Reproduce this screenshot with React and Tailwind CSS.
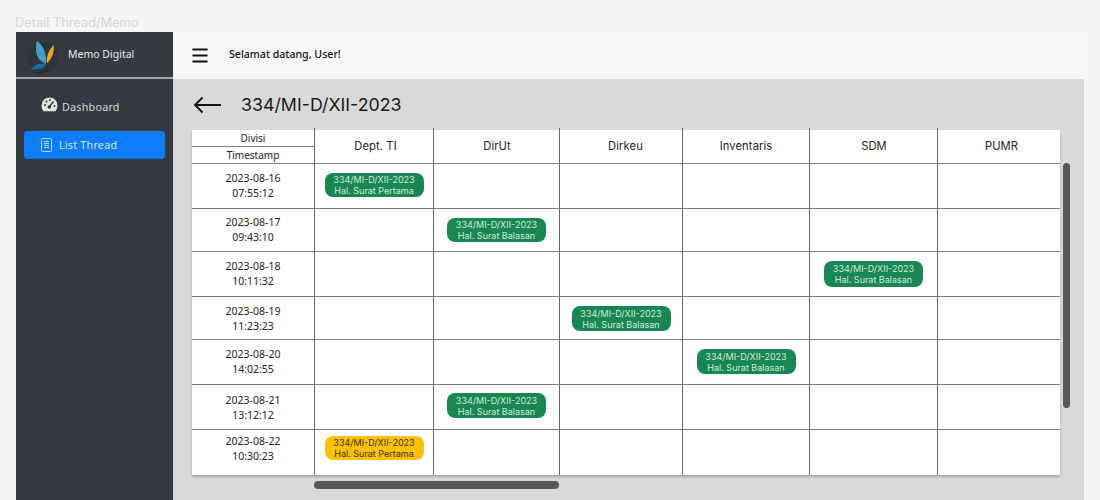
const cols = [
  { n: "Dept. TI", c: "pl-[3px]" },
  { n: "DirUt", c: "pl-[1px]" },
  { n: "Dirkeu", c: "pl-[9px]" },
  { n: "Inventaris", c: "" },
  { n: "SDM", c: "pl-[1px]" },
  { n: "PUMR", c: "pl-[5px]" },
];
const rows = [
  { d: "2023-08-16", t: "07:55:12", h: "h-[45px]", dp: "pt-[7px]", pp: "pt-[9px]", ph: "h-[24px]", col: 0, s: "Hal. Surat Pertama" },
  { d: "2023-08-17", t: "09:43:10", h: "h-[43px]", dp: "pt-[6px]", pp: "pt-[9px]", ph: "h-[24px]", col: 1, s: "Hal. Surat Balasan" },
  { d: "2023-08-18", t: "10:11:32", h: "h-[45px]", dp: "pt-[7px]", pp: "pt-[9px]", ph: "h-[26px]", col: 4, s: "Hal. Surat Balasan" },
  { d: "2023-08-19", t: "11:23:23", h: "h-[43px]", dp: "pt-[7px]", pp: "pt-[9px]", ph: "h-[25px]", col: 2, s: "Hal. Surat Balasan" },
  { d: "2023-08-20", t: "14:02:55", h: "h-[45px]", dp: "pt-[7px]", pp: "pt-[9px]", ph: "h-[25px]", col: 3, s: "Hal. Surat Balasan" },
  { d: "2023-08-21", t: "13:12:12", h: "h-[45px]", dp: "pt-[8px]", pp: "pt-[8px]", ph: "h-[25px]", col: 1, s: "Hal. Surat Balasan" },
  { d: "2023-08-22", t: "10:30:23", h: "h-[45px]", dp: "pt-[4px]", pp: "pt-[6px]", ph: "h-[24px]", col: 0, s: "Hal. Surat Pertama", warn: true },
];
const gridCols = "grid grid-cols-[123px_119px_126px_123px_127px_128px_122px]";

function Logo() {
  return (
    <svg width="36" height="40" viewBox="0 0 36 40" className="shrink-0">
      <ellipse cx="18" cy="22" rx="15" ry="15" fill="#2f3439" />
      <path d="M12 6 C18 10 22 18 21 29 C16 27 11 22 11 15 C11 11 11 8 12 6Z" fill="#3f9fc9" />
      <path d="M21 29 C20 33 14 35 6 34.500 C8 30 14 28 21 29Z" fill="#1d6c9c" />
      <path d="M29 10 C29 17 27 24 22 28 C21 22 24 14 29 10Z" fill="#e8a825" />
      <path d="M6 36 C14 39 24 36 30 31 C24 38 12 41 6 36Z" fill="#25292d" />
    </svg>
  );
}

function Gauge() {
  return (
    <svg width="17" height="15" viewBox="0 0 17 15">
      <path fill="#e4e4e4" d="M8.500 0.500a8 8 0 0 1 8 8c0 2-.6 3.800-1.700 5.200-.3.400-.7.600-1.200.600H3.400c-.5 0-.9-.2-1.200-.6C1.100 12.300.500 10.500.500 8.500a8 8 0 0 1 8-8Z" />
      <path d="M8 10 L12.500 4.500" stroke="#343a40" strokeWidth="1.400" />
      <circle cx="8.300" cy="10" r="1.800" fill="#343a40" />
      <circle cx="4" cy="8" r="1" fill="#343a40" />
      <circle cx="5.500" cy="4.500" r="1" fill="#343a40" />
      <circle cx="9" cy="3" r="1" fill="#343a40" />
      <circle cx="13.500" cy="9" r="1" fill="#343a40" />
    </svg>
  );
}

function Doc() {
  return (
    <svg width="11" height="14" viewBox="0 0 11 14" fill="none" stroke="#b5d8ff" strokeWidth="1">
      <rect x="0.500" y="0.500" width="10" height="13" rx="1" />
      <path d="M3 3.500h5M3 5.500h5M3 7.500h5M3 9.500h5" />
    </svg>
  );
}

function Pill({ warn, s, ph }) {
  return (
    <div className={`w-[99px] ${ph} rounded-[8px] flex flex-col items-center justify-center text-[9px] leading-[11px] font-['Inter',sans-serif] ${warn ? "bg-[#ffc107] text-[#3a2f05]" : "bg-[#198754] text-[#cfeadb]"}`}>
      <span>334/MI-D/XII-2023</span>
      <span>{s}</span>
    </div>
  );
}

export default function App() {
  return (
    <div className="w-[1100px] h-[500px] overflow-hidden bg-[#f5f5f5] font-['Open_Sans',sans-serif]">
      <div className="h-[32px] pl-[15px] pt-[14px] text-[12.800px] leading-[17px] text-[#d4d4d4] font-['Inter',sans-serif]">
        Detail Thread/Memo
      </div>
      <div className="ml-[16px] w-[1068px] h-[468px] flex">
        <aside className="w-[157px] shrink-0 bg-[#343a40] flex flex-col">
          <div className="h-[47px] border-b-2 border-[#a4a6a8] flex items-center pl-[9px] gap-[7px]">
            <Logo />
            <span className="text-[10.500px] text-[#e8e8e8] font-['Noto_Sans',sans-serif]">Memo Digital</span>
          </div>
          <div className="pt-[18px] pl-[25px] h-[36px] flex items-start gap-[4px]">
            <Gauge />
            <span className="text-[10.800px] leading-[18px] pt-[1px] text-[#d8d8d8] tracking-[0.2px] font-['Noto_Sans',sans-serif]">Dashboard</span>
          </div>
          <div className="mt-[16px] mx-[8px] w-[141px] h-[28px] rounded-[4px] bg-[#0d7dfd] flex items-center pl-[17px] gap-[7px]">
            <Doc />
            <span className="text-[10.800px] text-[#cfe5ff] tracking-[0.2px] font-['Noto_Sans',sans-serif]">List Thread</span>
          </div>
        </aside>
        <main className="flex-1 flex flex-col">
          <header className="h-[47px] shrink-0 bg-[#f6f6f6] flex items-center pl-[19px]">
            <svg width="16" height="15" viewBox="0 0 16 15" stroke="#111" strokeWidth="2">
              <path d="M0.500 1.500h15M0.500 7.500h15M0.500 13.500h15" />
            </svg>
            <span className="ml-[21px] pb-[2px] text-[10.600px] font-medium text-[#111] font-['Noto_Sans',sans-serif]">Selamat datang, User!</span>
          </header>
          <section className="relative flex-1 bg-[#d9d9d9] pl-[19px]">
            <div className="h-[51px] flex items-center">
              <svg width="28" height="18" viewBox="0 0 28 18" fill="none" stroke="#111" strokeWidth="1.800" className="ml-[1px]">
                <path d="M28 9H2M9.500 1.500L2 9l7.500 7.500" />
              </svg>
              <h1 className="ml-[20px] pt-[2px] text-[17.800px] text-[#1c1c1c] font-['Inter',sans-serif]">334/MI-D/XII-2023</h1>
            </div>
            <div className="w-[868px] bg-white shadow-[0_2px_2px_rgba(0,0,0,0.25)] text-[#222]">
              <div className={`${gridCols} h-[34px] border-b border-[#7d7d7d]`}>
                <div className="relative border-r border-[#666] flex flex-col text-[10px] font-['Noto_Sans',sans-serif]">
                  <span className="absolute -top-[2px] -right-[1px] h-[2px] w-px bg-[#666]" />
                  <div className="h-[17px] border-b border-[#7d7d7d] flex items-center justify-center">Divisi</div>
                  <div className="flex-1 flex items-center justify-center">Timestamp</div>
                </div>
                {cols.map((c, i) => (
                  <div key={c.n} className={`relative flex items-center justify-center text-[11.200px] tracking-[0.1px] font-['Inter',sans-serif] ${c.c} ${i < 5 ? "border-r border-[#666]" : ""}`}>
                    {i < 5 && <span className="absolute -top-[2px] -right-[1px] h-[2px] w-px bg-[#666]" />}
                    {c.n}
                  </div>
                ))}
              </div>
              {rows.map((r, ri) => (
                <div key={r.d} className={`${gridCols} ${r.h} ${ri < 6 ? "border-b border-[#7d7d7d]" : ""}`}>
                  <div className={`border-r border-[#666] flex flex-col items-center text-[10.500px] leading-[15px] font-['Noto_Sans',sans-serif] ${r.dp}`}>
                    <span>{r.d}</span>
                    <span>{r.t}</span>
                  </div>
                  {cols.map((c, i) => (
                    <div key={c.n} className={`flex items-start justify-center ${r.pp} ${i < 5 ? "border-r border-[#666]" : ""}`}>
                      {i === r.col && <Pill warn={r.warn} s={r.s} ph={r.ph} />}
                    </div>
                  ))}
                </div>
              ))}
            </div>
            <div className="absolute left-[890px] top-[84px] w-[7px] h-[245px] rounded-full bg-[#585858]" />
            <div className="absolute left-[141px] top-[402px] w-[245px] h-[8px] rounded-full bg-[#585858]" />
          </section>
        </main>
      </div>
    </div>
  );
}
